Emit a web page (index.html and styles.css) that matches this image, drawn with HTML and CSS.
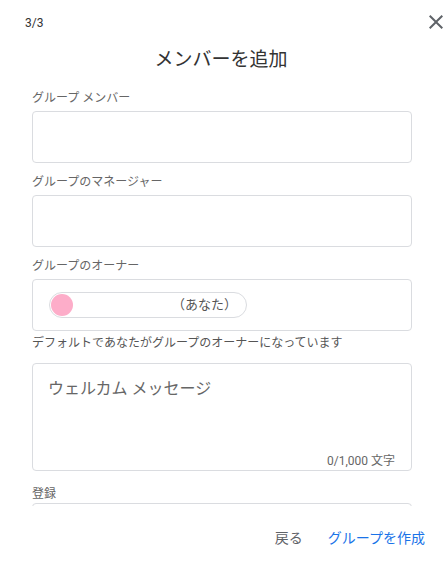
FILE: index.html
```html
<!DOCTYPE html>
<html lang="ja">
<head>
<meta charset="utf-8">
<title>メンバーを追加</title>
<link rel="stylesheet" href="styles.css">
</head>
<body>
<div class="dialog">
  <div class="scroll">
    <div class="top">
      <span class="step">3/3</span>
      <svg class="close" width="24" height="24" viewBox="0 0 24 24"><path d="M19 6.41 17.59 5 12 10.59 6.41 5 5 6.41 10.59 12 5 17.59 6.41 19 12 13.41 17.59 19 19 17.59 13.41 12z" fill="#5f6368"/></svg>
    </div>
    <h1 class="title">メンバーを追加</h1>
    <div class="form">
      <div class="label first">グループ メンバー</div>
      <div class="box"></div>
      <div class="label">グループのマネージャー</div>
      <div class="box"></div>
      <div class="label">グループのオーナー</div>
      <div class="box owner">
        <div class="chip">
          <span class="avatar"></span>
          <span class="you">（あなた）</span>
        </div>
      </div>
      <div class="helper">デフォルトであなたがグループのオーナーになっています</div>
      <div class="textarea">
        <div class="placeholder">ウェルカム メッセージ</div>
        <div class="counter">0/1,000 文字</div>
      </div>
      <div class="label reg">登録</div>
      <div class="box"></div>
    </div>
  </div>
  <div class="footer">
    <button class="btn back">戻る</button>
    <button class="btn create">グループを作成</button>
  </div>
</div>
</body>
</html>
```
FILE: styles.css
```css
* { box-sizing: border-box; }
html, body { margin: 0; padding: 0; background: #fff; }
body {
  font-family: Roboto, "Noto Sans CJK JP", sans-serif;
  color: #333;
}
.dialog {
  width: 448px;
  height: 565px;
  display: flex;
  flex-direction: column;
}
.scroll {
  height: 506px;
  overflow: hidden;
  flex: none;
}
.top {
  height: 44px;
  display: flex;
  align-items: center;
  justify-content: space-between;
  padding-left: 25px;
}
.step {
  font-size: 12px;
  line-height: 16px;
  padding-top: 1px;
  color: #333;
}
.close { display: block; }
.title {
  margin: 0;
  padding-right: 6px;
  font-weight: 400;
  font-size: 19px;
  line-height: 32px;
  text-align: center;
  color: #333;
}
.form {
  padding: 0 36px 0 32px;
}
.label {
  font-size: 12px;
  line-height: 16px;
  color: #666;
  margin-top: 11px;
  margin-bottom: 5px;
}
.label.first { margin-top: 14px; }
.label.reg { margin-top: 15px; margin-bottom: 1px; }
.box {
  height: 52px;
  border: 1px solid #dadce0;
  border-radius: 4px;
}
.owner {
  display: flex;
  align-items: center;
  padding-left: 16px;
}
.chip {
  width: 198px;
  height: 26px;
  border: 1px solid #dadce0;
  border-radius: 13px;
  display: flex;
  align-items: center;
  justify-content: space-between;
  padding: 0 9px 0 1px;
}
.avatar {
  width: 22px;
  height: 22px;
  border-radius: 50%;
  background: #fdadc9;
}
.you {
  font-size: 13px;
  line-height: 16px;
  color: #555;
}
.helper {
  margin-top: 4px;
  font-size: 12px;
  line-height: 16px;
  color: #555;
}
.textarea {
  margin-top: 12px;
  height: 108px;
  border: 1px solid #dadce0;
  border-radius: 4px;
  display: flex;
  flex-direction: column;
  justify-content: space-between;
  padding: 13px 16px 1px 15px;
}
.placeholder {
  font-size: 16px;
  line-height: 24px;
  color: #666;
}
.counter {
  text-align: right;
  font-size: 12px;
  line-height: 16px;
  color: #666;
}
.footer {
  flex: 1;
  display: flex;
  justify-content: flex-end;
  align-items: flex-start;
  padding: 22px 23px 0 0;
  gap: 25px;
}
.btn {
  border: 0;
  background: none;
  padding: 0;
  font-family: inherit;
  font-size: 14px;
  line-height: 20px;
  cursor: pointer;
}
.back { color: #5f6368; }
.create { color: #1a73e8; }
```
